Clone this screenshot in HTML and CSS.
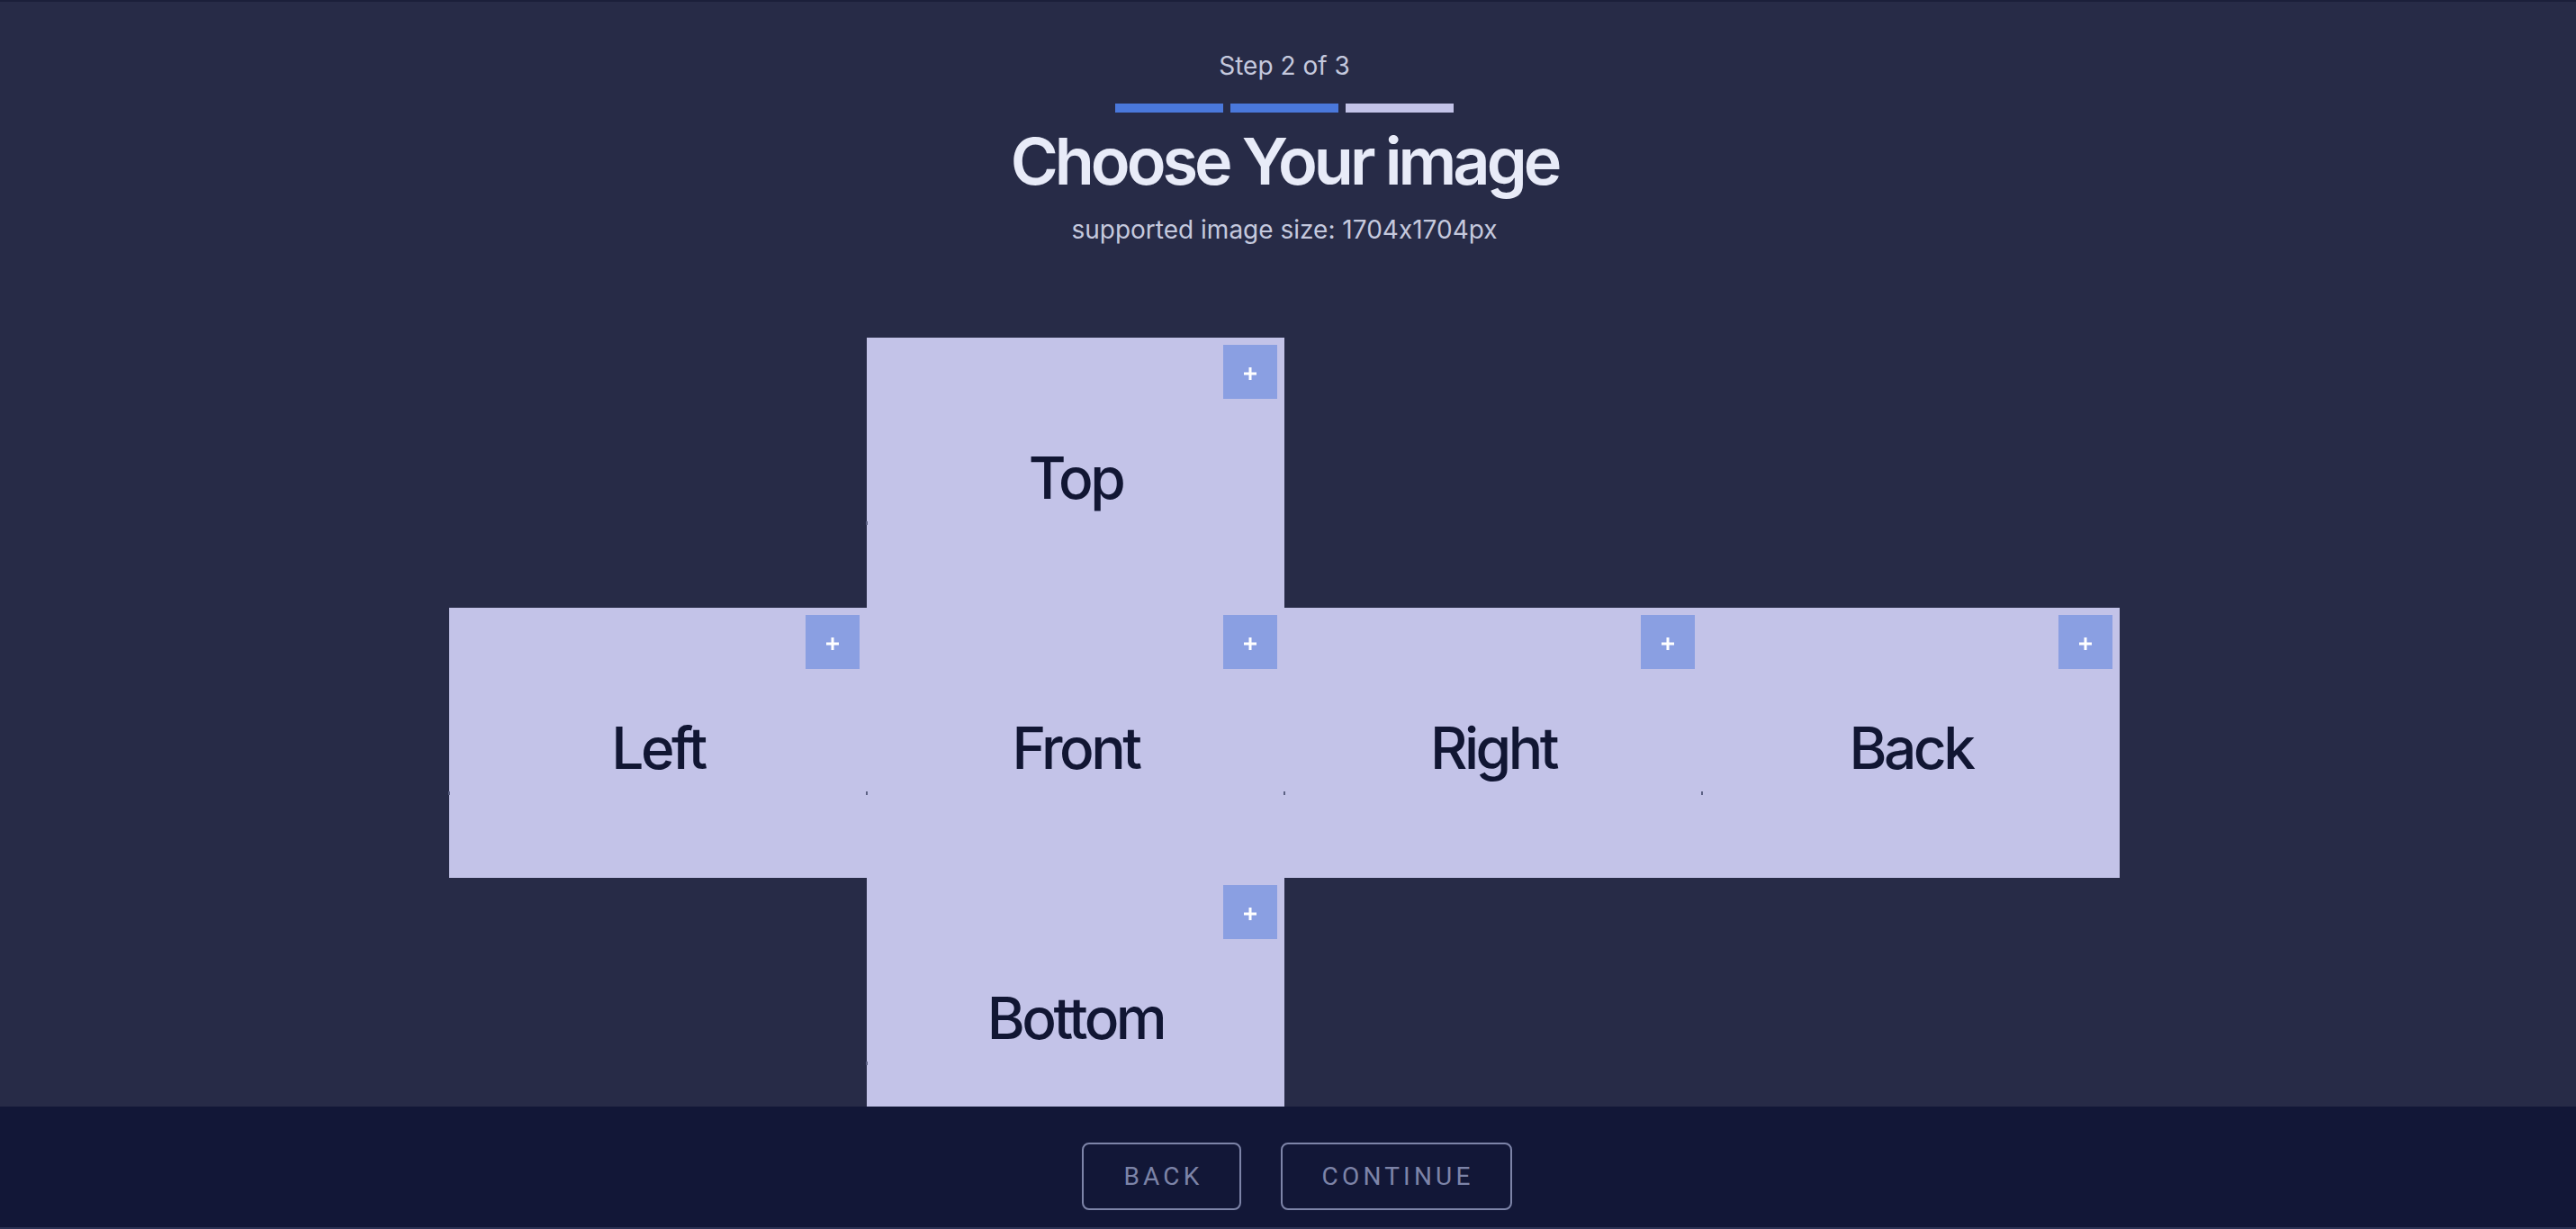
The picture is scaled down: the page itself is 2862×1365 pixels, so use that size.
FILE: index.html
```html
<!DOCTYPE html>
<html lang="en">
<head>
  <meta charset="UTF-8" />
  <meta name="viewport" content="width=device-width, initial-scale=1.0" />
  <title>Choose Your image</title>
  <link rel="stylesheet" href="styles.css">
</head>
<body>
  <div class="page">
    <main class="main">
      <header class="intro">
        <p class="step">Step 2 of 3</p>
        <div class="progress">
          <span class="bar done"></span>
          <span class="bar done"></span>
          <span class="bar"></span>
        </div>
        <h1>Choose Your image</h1>
        <p class="hint">supported image size: 1704x1704px</p>
      </header>

      <section class="net">
        <div class="face face-top">
          <button class="add" aria-label="Add top image"><svg viewBox="0 0 14 14"><path d="M7 0v14M0 7h14"/></svg></button>
          <span>Top</span>
        </div>
        <div class="face face-left">
          <button class="add" aria-label="Add left image"><svg viewBox="0 0 14 14"><path d="M7 0v14M0 7h14"/></svg></button>
          <span>Left</span>
        </div>
        <div class="face face-front">
          <button class="add" aria-label="Add front image"><svg viewBox="0 0 14 14"><path d="M7 0v14M0 7h14"/></svg></button>
          <span>Front</span>
        </div>
        <div class="face face-right">
          <button class="add" aria-label="Add right image"><svg viewBox="0 0 14 14"><path d="M7 0v14M0 7h14"/></svg></button>
          <span>Right</span>
        </div>
        <div class="face face-back">
          <button class="add" aria-label="Add back image"><svg viewBox="0 0 14 14"><path d="M7 0v14M0 7h14"/></svg></button>
          <span>Back</span>
        </div>
        <div class="face face-bottom">
          <button class="add" aria-label="Add bottom image"><svg viewBox="0 0 14 14"><path d="M7 0v14M0 7h14"/></svg></button>
          <span>Bottom</span>
        </div>
      </section>
    </main>

    <footer class="actions">
      <button class="btn">Back</button>
      <button class="btn">Continue</button>
    </footer>
  </div>
</body>
</html>
```

FILE: styles.css
```css
html, body {
  margin: 0;
  height: 100%;
}
body {
  font-family: Inter, "Noto Sans", sans-serif;
  font-feature-settings: "calt" 0;
  background: #272b47;
  color: #e8ebf8;
  overflow: hidden;
}
.page {
  display: flex;
  flex-direction: column;
  height: 100vh;
  border-top: 2px solid #1b1f3a;
  box-sizing: border-box;
}
.main {
  flex: 1;
  min-height: 0;
  overflow: hidden;
  padding-right: 8px;
  display: flex;
  flex-direction: column;
  align-items: center;
}

/* Header */
.intro {
  display: flex;
  flex-direction: column;
  align-items: center;
  padding-top: 54px;
}
.step {
  margin: 0;
  font-size: 28px;
  line-height: 34px;
  color: #c5c9de;
}
.progress {
  display: flex;
  gap: 8px;
  margin-top: 25px;
}
.bar {
  width: 120px;
  height: 10px;
  background: #c3c3e8;
}
.bar.done {
  background: #4a78db;
}
h1 {
  margin: 10px 0 0;
  font-size: 72px;
  line-height: 88px;
  font-weight: 600;
  letter-spacing: -4px;
  color: #e8ebf8;
}
.hint {
  margin: 15px 0 0;
  font-size: 28px;
  line-height: 34px;
  color: #c5c9de;
}

/* Cube net */
.net {
  display: grid;
  grid-template-columns: repeat(4, 464px);
  grid-template-rows: repeat(3, 300px);
  margin-top: 103px;
}
.face {
  position: relative;
  display: flex;
  align-items: center;
  justify-content: center;
  box-sizing: border-box;
  padding-top: 10px;
  background: #c3c3e8;
  color: #111633;
  font-size: 64px;
  font-weight: 500;
  letter-spacing: -3.5px;
}
.face::after {
  content: "";
  position: absolute;
  left: -1px;
  top: 204px;
  width: 2px;
  height: 4px;
  background: #5c6184;
}
.face-top { grid-column: 2; grid-row: 1; }
.face-left { grid-column: 1; grid-row: 2; }
.face-front { grid-column: 2; grid-row: 2; }
.face-right { grid-column: 3; grid-row: 2; }
.face-back { grid-column: 4; grid-row: 2; }
.face-bottom { grid-column: 2; grid-row: 3; }

.add {
  position: absolute;
  top: 8px;
  right: 8px;
  width: 60px;
  height: 60px;
  padding: 0;
  border: none;
  background: #8a9fe2;
  display: flex;
  align-items: center;
  justify-content: center;
  cursor: pointer;
}
.add svg {
  width: 14px;
  height: 14px;
  margin-top: 4px;
  stroke: #ffffff;
  stroke-width: 3;
  fill: none;
}

/* Footer */
.actions {
  height: 136px;
  flex-shrink: 0;
  box-sizing: border-box;
  background: #121737;
  border-bottom: 2px solid #2b3152;
  display: flex;
  justify-content: center;
  align-items: flex-start;
  gap: 44px;
  padding: 40px 0 0 20px;
}
.btn {
  height: 75px;
  padding: 0 40px 0 44px;
  background: transparent;
  border: 2px solid #7d84a8;
  border-radius: 8px;
  color: #7d84a8;
  font-family: Roboto, "Liberation Sans", sans-serif;
  font-size: 28px;
  letter-spacing: 4.2px;
  text-transform: uppercase;
  cursor: pointer;
}
```
